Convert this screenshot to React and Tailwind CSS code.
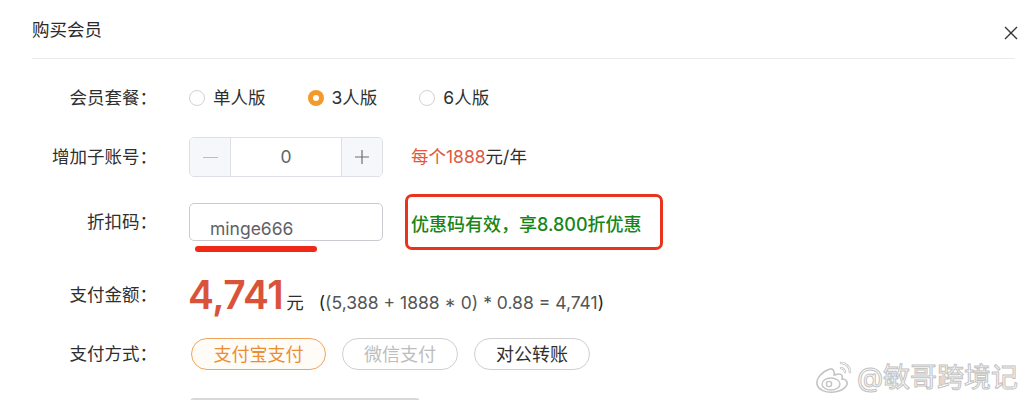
import { useState } from 'react'

const font = { fontFamily: 'Inter, "Noto Sans CJK SC", sans-serif' }

const Radio = ({ checked, label, onClick }) => (
  <button onClick={onClick} className="flex items-center gap-[8px] text-[17.5px] text-[#2f2f2f]">
    {checked ? (
      <span className="shrink-0 w-[16px] h-[16px] rounded-full bg-[#f39a2b] flex items-center justify-center">
        <span className="w-[6px] h-[6px] rounded-full bg-white" />
      </span>
    ) : (
      <span className="shrink-0 w-[16px] h-[16px] rounded-full border border-[#d2d2d2] bg-white" />
    )}
    {label}
  </button>
)

const Label = ({ children }) => (
  <div className="w-[125px] text-right text-[17.5px] text-[#2f2f2f] shrink-0">{children}</div>
)

const WeiboLogo = () => (
  <svg width="40" height="34" viewBox="0 0 40 34" fill="none">
    <path d="M16 9C9 11 2 18 3 24c1 6 9 9 17 8 9-1 14-6 13-10-1-3-4-3-5-3 1-3 0-5-3-5-2 0-4 1-5 1 1-3-1-7-4-6z" fill="#fff" stroke="#c4c4c4" strokeWidth="1.6" />
    <ellipse cx="17" cy="24" rx="9" ry="6" fill="#fff" stroke="#c4c4c4" strokeWidth="1.4" />
    <circle cx="15" cy="24" r="2.6" fill="#fff" stroke="#c4c4c4" strokeWidth="1.4" />
    <path d="M27 3c5 0 9 4 9 9" stroke="#c4c4c4" strokeWidth="2.6" strokeLinecap="round" />
    <path d="M27 3c5 0 9 4 9 9" stroke="#fff" strokeWidth="1" strokeLinecap="round" />
    <path d="M27 8c2 0 4 2 4 4" stroke="#c4c4c4" strokeWidth="2.4" strokeLinecap="round" />
    <path d="M27 8c2 0 4 2 4 4" stroke="#fff" strokeWidth="0.9" strokeLinecap="round" />
  </svg>
)

const App = () => {
  const [plan, setPlan] = useState('3')
  const [pay, setPay] = useState('alipay')

  return (
    <div style={font} className="relative w-[1030px] h-[400px] overflow-hidden bg-white">
      {/* header */}
      <div className="ml-8 mr-[15px] h-[59px] flex items-center justify-between border-b border-[#ebebeb]">
        <div className="text-[17.5px] text-[#2a2a2a] mt-[2px]">购买会员</div>
        <svg width="14" height="14" viewBox="0 0 14 14" className="mr-[-3px] mt-[8px]">
          <path d="M1 1l12 12M13 1L1 13" stroke="#333" strokeWidth="1.4" />
        </svg>
      </div>

      <div className="ml-8 flex flex-col">
        {/* plan */}
        <div className="flex items-center h-10 mt-[19px]">
          <Label>会员套餐：</Label>
          <div className="ml-[32px] flex items-center gap-[42px]">
            <Radio label="单人版" checked={plan === '1'} onClick={() => setPlan('1')} />
            <Radio label="3人版" checked={plan === '3'} onClick={() => setPlan('3')} />
            <Radio label="6人版" checked={plan === '6'} onClick={() => setPlan('6')} />
          </div>
        </div>

        {/* sub accounts */}
        <div className="flex items-center h-10 mt-[19px]">
          <Label>增加子账号：</Label>
          <div className="ml-[32px] flex w-[194px] h-10 border border-[#dcdfe6] rounded-[5px] overflow-hidden">
            <div className="w-[41px] bg-[#f5f7fa] border-r border-[#dcdfe6] flex items-center justify-center">
              <span className="w-[15px] h-px bg-[#b8bcc4]" />
            </div>
            <div className="flex-1 flex items-center justify-center text-[17.5px] text-[#606266]">0</div>
            <div className="w-[41px] bg-[#f5f7fa] border-l border-[#dcdfe6] flex items-center justify-center">
              <svg width="16" height="16" viewBox="0 0 16 16">
                <path d="M8 1v14M1 8h14" stroke="#6b6f76" strokeWidth="1.2" />
              </svg>
            </div>
          </div>
          <div className="ml-[28px] text-[17.5px]">
            <span className="text-[#e05a41]">每个1888</span>
            <span className="text-[#2f2f2f]">元/年</span>
          </div>
        </div>

        {/* discount code */}
        <div className="flex items-center h-[56px] mt-[17px]">
          <Label>折扣码：</Label>
          <div className="relative ml-[32px] w-[194px] h-[38px] border border-[#c9cbd0] rounded-[5px] pl-5 pt-[13px] text-[17.5px] leading-[24px] text-[#5f6166]">
            minge666
            <span className="absolute left-[5px] top-[42px] w-[122px] h-[6px] rounded-full bg-[#ee2a17]" />
          </div>
          <div className="ml-[22px] w-[258px] h-[56px] border-[3px] border-[#e8341c] rounded-[7px] flex items-center pl-[3px] pt-[4px] text-[18px] font-medium text-[#178517]">
            优惠码有效，享8.800折优惠
          </div>
        </div>

        {/* amount */}
        <div className="flex items-center h-10 mt-[25px]">
          <Label>支付金额：</Label>
          <div className="ml-[31px] flex items-baseline">
            <span className="text-[39px] font-semibold text-[#d9533a] tracking-[-0.5px]">4,741</span>
            <span className="ml-[3px] text-[17.5px] text-[#2f2f2f]">元</span>
            <span className="ml-[15px] text-[17.5px] text-[#555]">
              <span className="text-[#222]">(</span>(5,388 + 1888 * 0) * 0.88 = 4,741<span className="text-[#222]">)</span>
            </span>
          </div>
        </div>

        {/* pay method */}
        <div className="flex items-center h-10 mt-[19px]">
          <Label>支付方式：</Label>
          <div className="ml-[34px] flex items-center gap-4">
            <button
              onClick={() => setPay('alipay')}
              className="w-[135px] h-[32px] rounded-full border border-[#f0a45c] bg-[#fffbf6] text-[18px] text-[#ea8e36]"
            >
              支付宝支付
            </button>
            <button
              onClick={() => setPay('wechat')}
              className="w-[116px] h-[32px] rounded-full border border-[#cfcfcf] text-[18px] text-[#bdbdbd]"
            >
              微信支付
            </button>
            <button
              onClick={() => setPay('bank')}
              className="w-[116px] h-[32px] rounded-full border border-[#cfcfcf] text-[18px] text-[#2f2f2f]"
            >
              对公转账
            </button>
          </div>
        </div>

        <div className="ml-[158px] mt-[24px] w-[230px] h-10 border-t-2 border-x border-[#d8d8d8] rounded-t-[4px]" />
      </div>

      {/* watermark */}
      <div className="absolute right-[12px] bottom-[6px] flex items-center gap-[3px]">
        <WeiboLogo />
        <span className="text-[27px] text-white [-webkit-text-stroke:1px_#c2c2c2] leading-none">@敏哥跨境记</span>
      </div>
    </div>
  )
}

export default App
